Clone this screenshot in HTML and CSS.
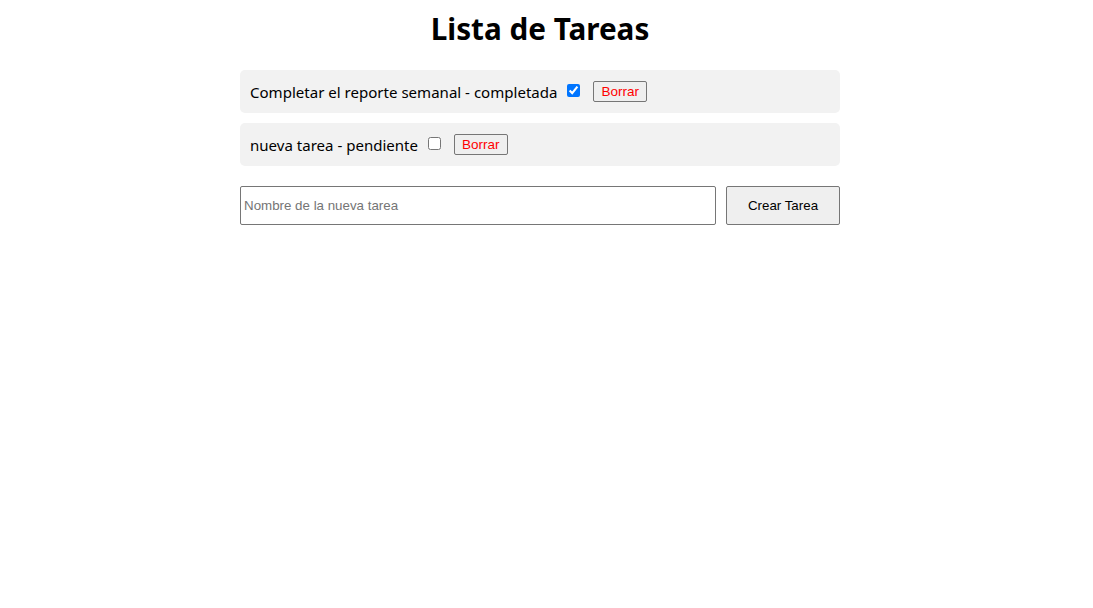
FILE: index.html
```html
<!DOCTYPE html>
<html lang="es">
<head>
<meta charset="utf-8">
<title>Lista de Tareas</title>
<link rel="stylesheet" href="styles.css">
</head>
<body>
<main class="app">
  <h1 class="title">Lista de Tareas</h1>
  <ul class="tasks">
    <li class="task">
      <span class="task-text">Completar el reporte semanal - completada</span>
      <input class="task-check" type="checkbox" checked>
      <button class="task-delete" type="button">Borrar</button>
    </li>
    <li class="task">
      <span class="task-text">nueva tarea - pendiente</span>
      <input class="task-check" type="checkbox">
      <button class="task-delete" type="button">Borrar</button>
    </li>
  </ul>
  <form class="new-task">
    <input class="new-task-input" type="text" placeholder="Nombre de la nueva tarea">
    <button class="new-task-btn" type="button">Crear Tarea</button>
  </form>
</main>
</body>
</html>
```
FILE: styles.css
```css
html, body {
  margin: 0;
  padding: 0;
  background: #ffffff;
}
body {
  padding-right: 13px;
  font-family: "Noto Sans", "Open Sans", sans-serif;
  color: #000;
}
.app {
  width: 600px;
  margin: 0 auto;
}
.title {
  margin: 0;
  padding-top: 9px;
  font-size: 29.7px;
  font-weight: 700;
  line-height: 40px;
  text-align: center;
}
.tasks {
  list-style: none;
  margin: 21px 0 0;
  padding: 0;
  display: flex;
  flex-direction: column;
  gap: 10px;
}
.task {
  display: flex;
  align-items: center;
  height: 43px;
  box-sizing: border-box;
  padding: 0 10px;
  background: #f2f2f2;
  border-radius: 5px;
  font-size: 15.05px;
}
.task-check {
  width: 13px;
  height: 13px;
  margin: 0 0 2px 10px;
  accent-color: #0075ff;
}
.task-delete {
  margin-left: 13px;
  height: 21px;
  padding: 0 7px;
  font-family: "Liberation Sans", Arial, sans-serif;
  font-size: 13.5px;
  color: #ff0000;
  background: #efefef;
  border: 1px solid #767676;
  border-radius: 2px;
}
.new-task {
  display: flex;
  gap: 10px;
  margin-top: 20px;
  height: 39px;
}
.new-task-input {
  flex: 1;
  margin: 0;
  box-sizing: border-box;
  height: 39px;
  padding: 0 3px;
  font-family: "Liberation Sans", Arial, sans-serif;
  font-size: 13.33px;
  border: 1px solid #767676;
  border-radius: 2px;
}
.new-task-input::placeholder {
  color: #757575;
}
.new-task-btn {
  width: 114px;
  height: 39px;
  margin: 0;
  font-family: "Liberation Sans", Arial, sans-serif;
  font-size: 13.33px;
  color: #000;
  background: #efefef;
  border: 1px solid #767676;
  border-radius: 2px;
}
```
